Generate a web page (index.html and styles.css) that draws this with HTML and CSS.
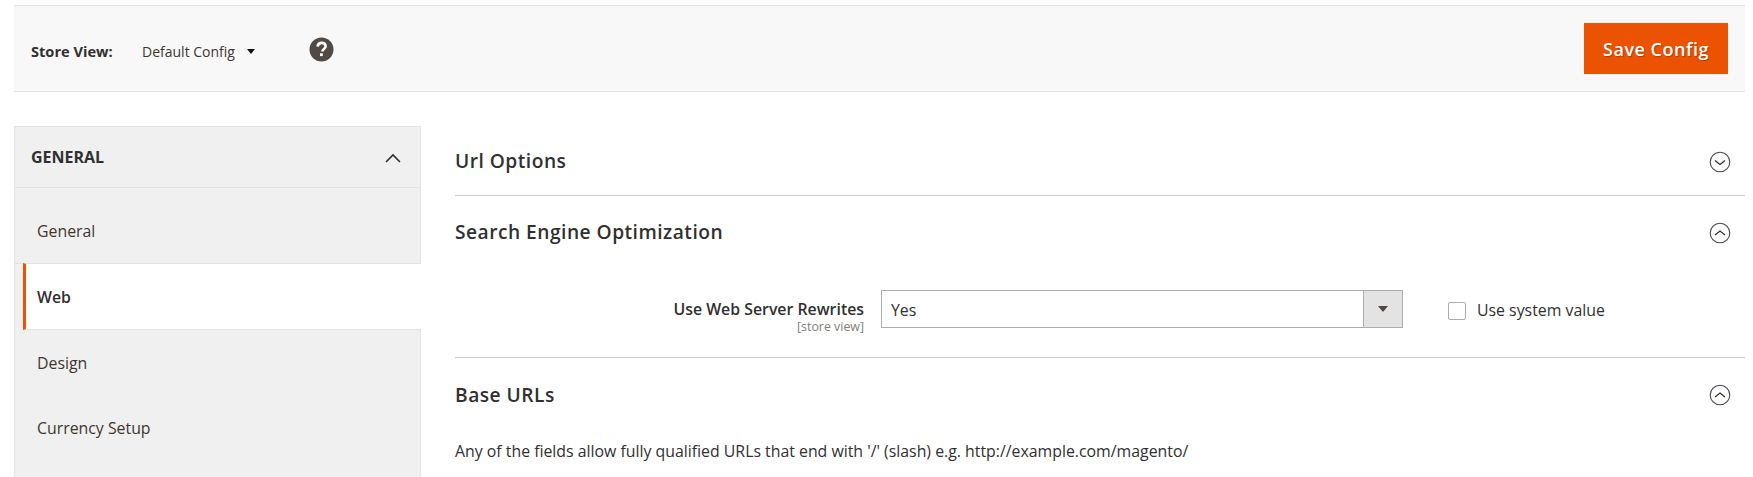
FILE: index.html
```html
<!DOCTYPE html>
<html lang="en">
<head>
<meta charset="utf-8">
<title>Configuration</title>
<link rel="stylesheet" href="styles.css">
</head>
<body>
<header class="topbar">
  <div class="scope">
    <span class="scope-label">Store View:</span>
    <span class="scope-value">Default Config</span>
    <span class="scope-caret"></span>
    <svg class="help" width="25" height="25" viewBox="0 0 25 25"><circle cx="12.5" cy="12.5" r="12" fill="#514943"/><path d="M8.600 9.600c.2-2.400 1.900-3.700 4.100-3.700 2.300 0 3.900 1.300 3.900 3.300 0 1.500-.8 2.300-1.900 3.100-1 .7-1.300 1.100-1.300 2.200" fill="none" stroke="#fff" stroke-width="2.600"/><rect x="11" y="16.300" width="2.800" height="2.800" fill="#fff"/></svg>
  </div>
  <button class="save" type="button">Save Config</button>
</header>
<div class="columns">
  <aside class="sidebar">
    <div class="side-title">
      <span>GENERAL</span>
      <svg class="side-chevron" width="16" height="10" viewBox="0 0 16 10"><path d="M1 9l7-7 7 7" fill="none" stroke="#303030" stroke-width="1.600"/></svg>
    </div>
    <ul class="side-list">
      <li class="side-item side-first">General</li>
      <li class="side-item side-active">Web</li>
      <li class="side-item side-plain">Design</li>
      <li class="side-item side-plain">Currency Setup</li>
    </ul>
  </aside>
  <main class="content">
    <section class="section section-closed">
      <h2>Url Options</h2>
      <svg class="toggle" width="22" height="22" viewBox="0 0 22 22"><circle cx="11" cy="11" r="9.800" fill="none" stroke="#41464f" stroke-width="1.100"/><path d="M6 9.500l5 4 5-4" fill="none" stroke="#303030" stroke-width="1.300"/></svg>
    </section>
    <section class="section section-seo">
      <div class="section-head">
        <h2>Search Engine Optimization</h2>
        <svg class="toggle" width="22" height="22" viewBox="0 0 22 22"><circle cx="11" cy="11" r="9.800" fill="none" stroke="#41464f" stroke-width="1.100"/><path d="M6 13l5-4 5 4" fill="none" stroke="#303030" stroke-width="1.300"/></svg>
      </div>
      <div class="field">
        <div class="field-label">
          <strong>Use Web Server Rewrites</strong>
          <small>[store view]</small>
        </div>
        <div class="select">
          <span class="select-value">Yes</span>
          <span class="select-arrow"><i></i></span>
        </div>
        <label class="inherit"><span class="checkbox"></span>Use system value</label>
      </div>
    </section>
    <section class="section-base">
      <div class="section-head">
        <h2>Base URLs</h2>
        <svg class="toggle" width="22" height="22" viewBox="0 0 22 22"><circle cx="11" cy="11" r="9.800" fill="none" stroke="#41464f" stroke-width="1.100"/><path d="M6 13l5-4 5 4" fill="none" stroke="#303030" stroke-width="1.300"/></svg>
      </div>
      <p class="note">Any of the fields allow fully qualified URLs that end with '/' (slash) e.g. http://example.com/magento/</p>
    </section>
  </main>
</div>
</body>
</html>
```
FILE: styles.css
```css
* { box-sizing: border-box; }
html, body { margin: 0; height: 477px; overflow: hidden; background: #fff; }
body {
  padding: 5px 8px 0 14px;
  font-family: "Open Sans", sans-serif;
  color: #303030;
  font-size: 15.85px;
}
.topbar {
  height: 87px;
  background: #f8f8f8;
  border-top: 1px solid #e3e3e3;
  border-bottom: 1px solid #e3e3e3;
  display: flex;
  justify-content: space-between;
  align-items: flex-start;
  padding: 17px 17px 0 17px;
}
.scope { display: flex; align-items: center; height: 34px; margin-top: 11px; }
.scope-label { font-weight: 700; font-size: 14.6px; width: 111px; color: #303030; }
.scope-value { font-size: 14px; color: #41362f; }
.scope-caret {
  margin-left: 12px;
  border-left: 4px solid transparent;
  border-right: 4px solid transparent;
  border-top: 5px solid #111;
  margin-top: 1px;
}
.help { margin-left: 54px; margin-top: -4px; }
.save {
  width: 144px;
  height: 51px;
  border: 0;
  background: #eb5202;
  color: #fff;
  font-family: inherit;
  font-weight: 600;
  font-size: 18px;
  letter-spacing: .5px;
  text-shadow: 1px 1px 1px rgba(0,0,0,.25);
}
.columns { display: flex; padding-top: 34px; }
.sidebar {
  width: 407px;
  flex: none;
  height: 351px;
  background: #f0f0f0;
  border: 1px solid #e3e3e3;
  border-bottom: 0;
}
.side-title {
  height: 61px;
  border-bottom: 1px solid #e3e3e3;
  display: flex;
  align-items: center;
  justify-content: space-between;
  padding: 0 19px 0 16px;
  font-weight: 700;
  font-size: 16px;
}
.side-chevron { margin-top: 2px; }
.side-list { list-style: none; margin: 0; padding: 0; }
.side-item { font-size: 15.85px; padding-left: 22px; display: flex; align-items: center; height: 65px; color: #41362f; }
.side-first { height: 76px; padding-top: 11px; border-bottom: 1px solid #e3e3e3; }
.side-active {
  height: 67px;
  margin-top: -1px;
  margin-left: 8px;
  margin-right: -1px;
  padding-left: 11px;
  background: #fff;
  border-left: 3px solid #eb5202;
  border-top: 1px solid #e3e3e3;
  border-bottom: 1px solid #e3e3e3;
  font-weight: 600;
  color: #303030;
}
.content { flex: 1; margin-left: 34px; }
.section { border-bottom: 1px solid #cccccc; }
.section-closed { height: 70px; display: flex; justify-content: space-between; align-items: center; }
h2 {
  margin: 0;
  font-size: 19.2px;
  font-weight: 600;
  letter-spacing: .48px;
  color: #303030;
}
.toggle { margin-right: 14px; margin-top: 2px; }
.section-seo { height: 162px; }
.section-head { display: flex; justify-content: space-between; align-items: center; height: 71px; }
.field { display: flex; align-items: flex-start; padding-top: 23px; }
.field-label { width: 409px; text-align: right; display: flex; flex-direction: column; }
.field-label strong { font-size: 15.85px; font-weight: 600; line-height: 19px; margin-top: 10px; }
.field-label small { font-size: 12.4px; line-height: 13px; margin-top: 1px; color: #808080; }
.select {
  margin-left: 17px;
  width: 522px;
  height: 38px;
  border: 1px solid #adadad;
  display: flex;
  justify-content: space-between;
  align-items: center;
  background: #fff;
}
.select-value { padding: 1px 0 0 9px; font-size: 15.85px; color: #303030; }
.select-arrow {
  width: 39px;
  height: 100%;
  background: #e3e3e3;
  border-left: 1px solid #adadad;
  display: flex;
  align-items: center;
  justify-content: center;
}
.select-arrow i {
  border-left: 5px solid transparent;
  border-right: 5px solid transparent;
  border-top: 6px solid #514943;
}
.inherit { margin-left: 45px; display: flex; align-items: center; height: 38px; padding-top: 1px; font-size: 15.85px; color: #303030; }
.checkbox {
  width: 18px;
  height: 18px;
  border: 1px solid #adadad;
  border-radius: 2px;
  background: #fff;
  margin-right: 11px;
  margin-top: 3px;
}
.section-base .section-head { height: 72px; }
.note { margin: 0; padding-top: 11px; font-size: 15.85px; line-height: 20px; color: #303030; }
```
